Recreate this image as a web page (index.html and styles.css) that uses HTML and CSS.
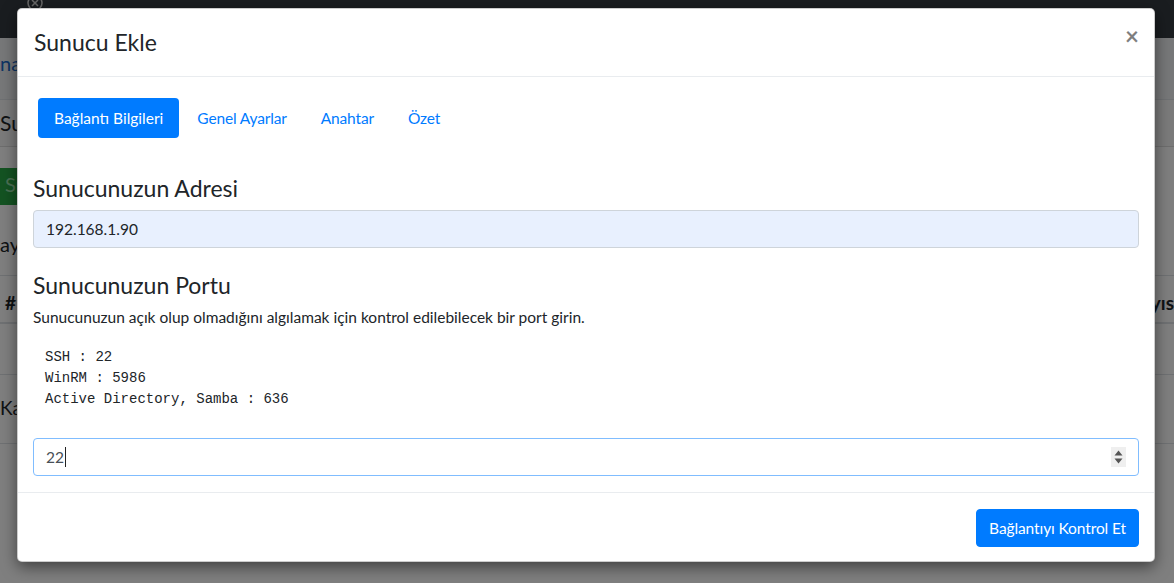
FILE: index.html
```html
<!DOCTYPE html>
<html lang="tr">
<head>
<meta charset="utf-8">
<title>Sunucu Ekle</title>
<link rel="stylesheet" href="styles.css">
</head>
<body>
<div class="page">
  <nav class="navbar">
    <svg class="logo" width="18" height="18" viewBox="0 0 18 18"><circle cx="9" cy="5" r="7" fill="none" stroke="#d0d0d0" stroke-width="1.5"/><path d="M6 2 L12 8 M12 2 L6 8" stroke="#d0d0d0" stroke-width="1.5"/></svg>
  </nav>
  <div class="crumb"><a class="crumb-link">na</a></div>
  <div class="card-head">Sun</div>
  <div class="card-body">
    <div class="btn-green">Su</div>
    <p class="page-text">ay</p>
    <div class="tbl">
      <div class="tr th"><span>#</span><span>yıs</span></div>
      <div class="tr tr-mid"></div>
      <div class="tr tr-row"><span class="row-text">Kay</span></div>
    </div>
  </div>
</div>
<div class="backdrop"></div>

<div class="modal">
  <div class="modal-header">
    <h5 class="modal-title">Sunucu Ekle</h5>
    <span class="close">×</span>
  </div>
  <div class="modal-body">
    <div class="tabs">
      <a class="tab active">Bağlantı Bilgileri</a>
      <a class="tab">Genel Ayarlar</a>
      <a class="tab">Anahtar</a>
      <a class="tab">Özet</a>
    </div>
    <h4 class="heading heading-first">Sunucunuzun Adresi</h4>
    <div class="field field-autofill">192.168.1.90</div>
    <h4 class="heading heading-second">Sunucunuzun Portu</h4>
    <p class="hint">Sunucunuzun açık olup olmadığını algılamak için kontrol edilebilecek bir port girin.</p>
    <pre class="ports">SSH : 22
WinRM : 5986
Active Directory, Samba : 636</pre>
    <div class="field field-focus"><span class="value">22</span><span class="caret"></span>
      <span class="spinner"><svg width="15" height="20" viewBox="0 0 15 20"><path d="M3.5 8.5 L7.5 3.5 L11.5 8.5 Z M3.5 11.5 L11.5 11.5 L7.5 16.5 Z" fill="#555"/></svg></span>
    </div>
  </div>
  <div class="modal-footer">
    <button class="btn-primary">Bağlantıyı Kontrol Et</button>
  </div>
</div>
</body>
</html>
```
FILE: styles.css
```css
* { box-sizing: border-box; }
html, body { margin: 0; padding: 0; }
body {
  width: 1174px;
  height: 583px;
  overflow: hidden;
  position: relative;
  background: #fff;
  font-family: "Lato", "Noto Sans", sans-serif;
  font-size: 15.5px;
  color: #212529;
}

/* background page */
.page { width: 1174px; height: 583px; }
.navbar { height: 38px; background: #343a40; position: relative; }
.logo { position: absolute; left: 26px; top: -2px; }
.crumb {
  height: 62px;
  background: #eef0f2;
  border-bottom: 1px solid #dee2e6;
  padding-top: 13px;
  font-size: 20px;
}
.crumb-link { color: #1a68c8; }
.card-head {
  height: 47px;
  background: #f7f7f7;
  border-bottom: 1px solid #dcdcdc;
  font-size: 21px;
  padding: 10px 0 0 0;
}
.card-body { padding-top: 21px; }
.btn-green {
  width: 200px;
  height: 37px;
  background: #28a745;
  color: #9be0aa;
  font-size: 20px;
  padding: 4px 0 0 5px;
}
.page-text { margin: 25px 0 0; font-size: 20px; height: 45px; line-height: 28px; }
.tr { border-top: 1px solid #dee2e6; display: flex; justify-content: space-between; font-size: 19px; }
.th { height: 49px; font-weight: 700; padding: 15px 0 0 5px; border-bottom: 2px solid #dee2e6; }
.tr-mid { height: 50px; border-top: none; }
.tr-row { height: 70px; padding-top: 21px; border-bottom: 1px solid #dee2e6; }

.backdrop {
  position: absolute;
  inset: 0;
  background: rgba(0, 0, 0, 0.5);
}

/* modal */
.modal {
  position: absolute;
  left: 17px;
  top: 8px;
  width: 1138px;
  background: #fff;
  border: 1px solid rgba(0, 0, 0, 0.2);
  border-radius: 5px;
  box-shadow: 0 5px 15px rgba(0, 0, 0, 0.5);
  display: flex;
  flex-direction: column;
}
.modal-header {
  display: flex;
  align-items: flex-start;
  justify-content: space-between;
  padding: 16px;
  border-bottom: 1px solid #e9ecef;
}
.modal-title {
  margin: 0;
  font-size: 23px;
  font-weight: 400;
  line-height: 34.5px;
}
.close {
  font-size: 24px;
  font-weight: 700;
  line-height: 24px;
  color: #000;
  opacity: 0.5;
  margin-top: -1px;
  margin-right: -1px;
}
.modal-body { padding: 16px 15px; }
.tabs { display: flex; gap: 2px; margin: 5px 0 0 5px; }
.tab {
  display: block;
  padding: 8px 16px;
  line-height: 24px;
  color: #007bff;
  border-radius: 4px;
  letter-spacing: -0.15px;
}
.tab.active { background: #007bff; color: #fff; letter-spacing: 0; }
.heading {
  margin: 0 0 8px;
  font-size: 23px;
  font-weight: 400;
  line-height: 28.8px;
}
.heading-first { margin-top: 36px; }
.heading-second { margin-bottom: 5px; }
.field {
  height: 38px;
  border: 1px solid #ced4da;
  border-radius: 4px;
  padding: 6px 12px;
  line-height: 24px;
  display: flex;
  align-items: center;
  position: relative;
}
.field-autofill { background: #e8f0fe; color: #212529; margin-bottom: 23px; }
.field-focus { border-color: #80bdff; color: #495057; }
.caret { display: inline-block; width: 1px; height: 20px; background: #222; margin-left: 1px; }
.spinner {
  position: absolute;
  right: 12px;
  top: 8px;
  width: 15px;
  height: 20px;
  background: #efefef;
  display: flex;
}
.hint { margin: 0 0 18px; line-height: 24px; }
.ports {
  margin: 0 0 28px;
  padding-left: 12px;
  font-family: "Liberation Mono", monospace;
  font-size: 14px;
  line-height: 21px;
  color: #212529;
}
.modal-footer {
  border-top: 1px solid #e9ecef;
  padding: 16px 15px 14px 16px;
  display: flex;
  justify-content: flex-end;
}
.btn-primary {
  background: #007bff;
  color: #fff;
  border: 1px solid #007bff;
  border-radius: 4px;
  padding: 6px 12px;
  font-family: "Lato", "Noto Sans", sans-serif;
  font-size: 15.5px;
  line-height: 24px;
  letter-spacing: -0.1px;
}
```
